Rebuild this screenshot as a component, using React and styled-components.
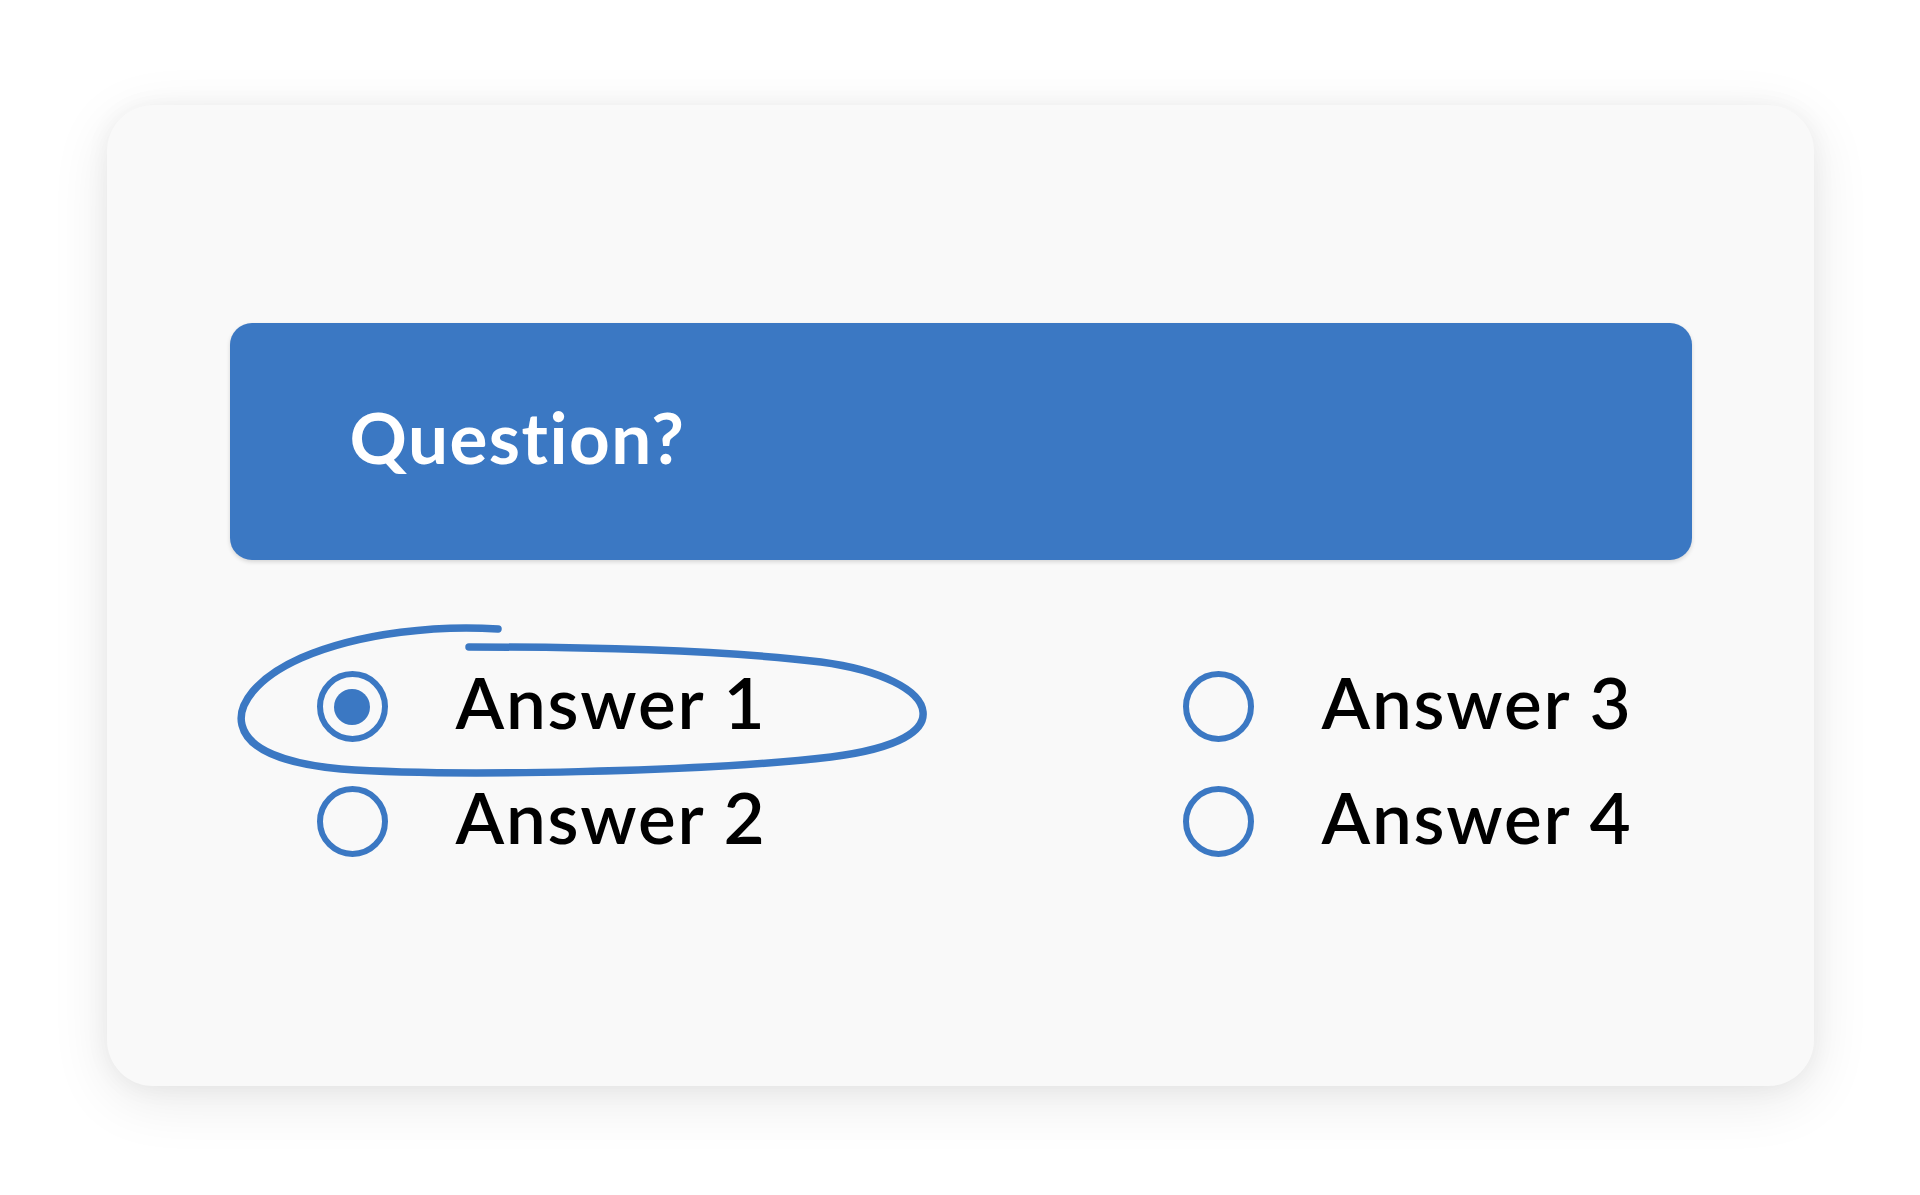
import React from "react";
import styled, { createGlobalStyle } from "styled-components";

const BLUE = "#3b78c3";

const Global = createGlobalStyle`
  html, body { margin: 0; padding: 0; background: #ffffff; }
  body { font-family: "Lato", "Noto Sans", sans-serif; }
`;

const Page = styled.div`
  width: 1920px;
  height: 1195px;
  display: flex;
  align-items: center;
  justify-content: center;
`;

const Card = styled.div`
  position: relative;
  box-sizing: border-box;
  width: 1707px;
  height: 981px;
  margin-top: -4px;
  padding: 218px 122px 0 123px;
  background: #f9f9f9;
  border-radius: 46px;
  box-shadow: 0 14px 60px rgba(0, 0, 0, 0.09), 0 2px 24px rgba(0, 0, 0, 0.05);
`;

const QuestionBar = styled.div`
  box-sizing: border-box;
  height: 237px;
  display: flex;
  align-items: center;
  padding-left: 120px;
  background: ${BLUE};
  border-radius: 22px;
  box-shadow: 0 2px 4px rgba(0, 0, 0, 0.14);
`;

const QuestionText = styled.h1`
  margin: 0;
  padding-bottom: 10px;
  color: #ffffff;
  font-family: "Lato", "Noto Sans", sans-serif;
  font-weight: 700;
  font-size: 71px;
  line-height: 1;
  letter-spacing: 1.5px;
`;

const Answers = styled.div`
  display: grid;
  grid-template-columns: 866px 1fr;
  grid-auto-rows: 115px;
  margin-top: 89px;
  padding-left: 87px;
`;

const Option = styled.label`
  display: flex;
  align-items: center;
  gap: 68px;
`;

const Radio = styled.span`
  box-sizing: border-box;
  flex: none;
  width: 71px;
  height: 71px;
  border-radius: 50%;
  border: 6px solid ${BLUE};
  display: flex;
  align-items: center;
  justify-content: center;
  &::after {
    content: "";
    display: ${(p) => (p.$checked ? "block" : "none")};
    width: 36px;
    height: 36px;
    border-radius: 50%;
    background: ${BLUE};
  }
`;

const AnswerText = styled.span`
  padding-bottom: 10px;
  color: #000000;
  font-family: "Lato", "Noto Sans", sans-serif;
  font-weight: 600;
  font-size: 71px;
  line-height: 1;
  letter-spacing: 1.8px;
`;

const Scribble = styled.svg`
  position: absolute;
  left: 0;
  top: 0;
  pointer-events: none;
  overflow: visible;
`;

const answers = [
  { label: "Answer 1", checked: true },
  { label: "Answer 3" },
  { label: "Answer 2" },
  { label: "Answer 4" },
];

export default function App() {
  return (
    <>
      <Global />
      <Page>
        <Card>
          <QuestionBar>
            <QuestionText>Question?</QuestionText>
          </QuestionBar>
          <Answers>
            {answers.map((a) => (
              <Option key={a.label}>
                <Radio $checked={a.checked} />
                <AnswerText>{a.label}</AnswerText>
              </Option>
            ))}
          </Answers>
          <Scribble width="1707" height="981" viewBox="106 105 1707 981">
            <path
              d="M 497 629 C 440 625, 360 632, 300 658 C 255 678, 236 705, 241 725 C 247 750, 285 764, 340 769 C 450 777, 700 772, 830 757 C 900 748, 924 730, 922 712 C 920 690, 880 670, 820 662 C 720 650, 580 647, 468 647"
              fill="none"
              stroke={BLUE}
              strokeWidth="7.5"
              strokeLinecap="round"
              strokeLinejoin="round"
            />
          </Scribble>
        </Card>
      </Page>
    </>
  );
}
